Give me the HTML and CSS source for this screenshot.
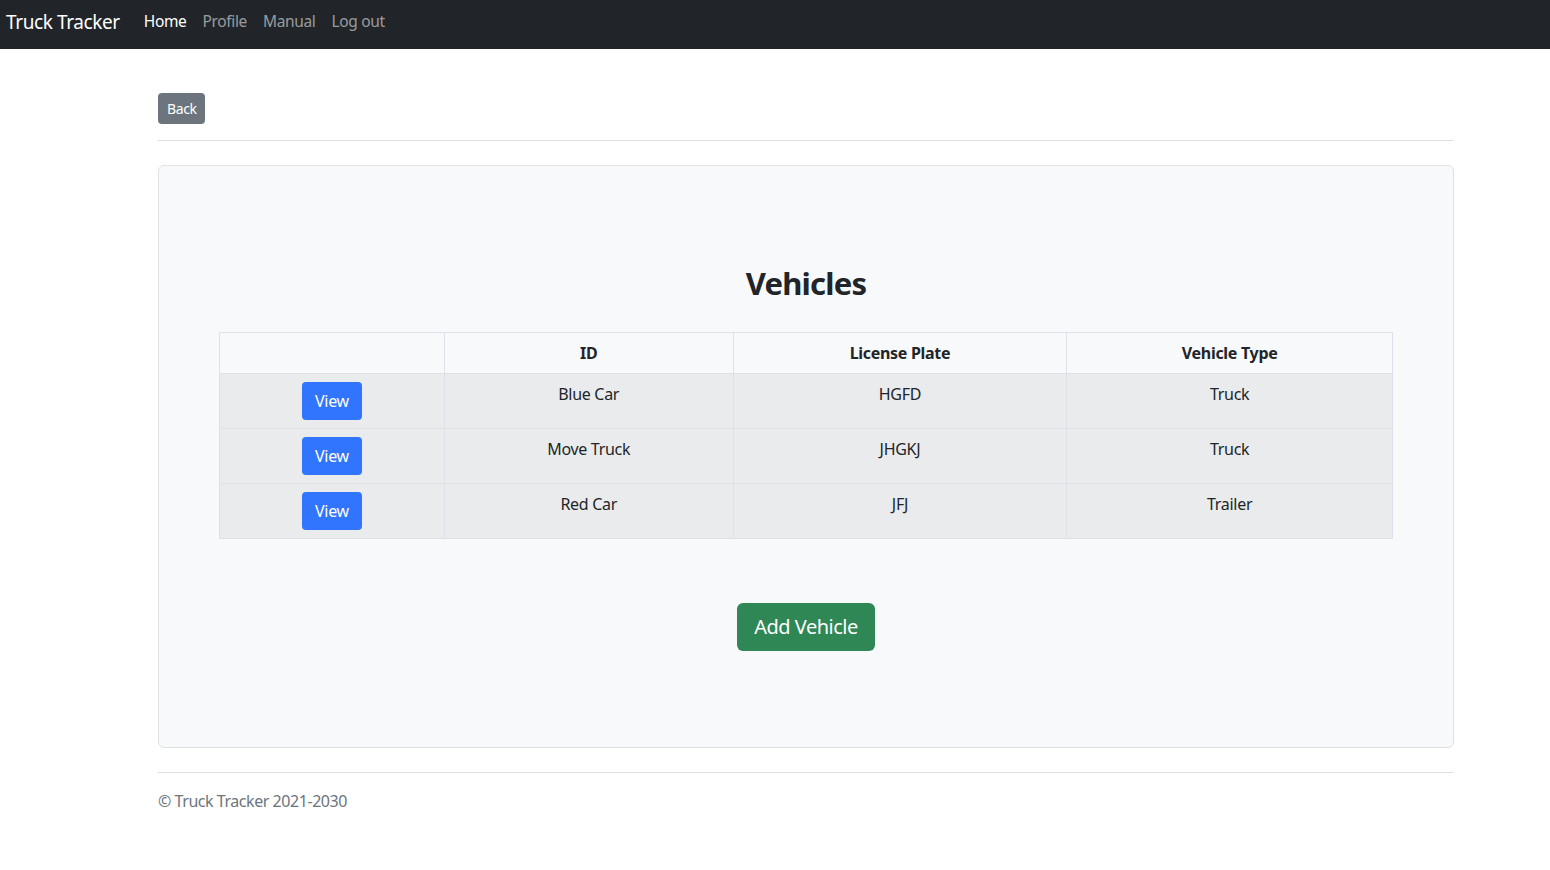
FILE: index.html
```html
<!DOCTYPE html>
<html lang="en">
<head>
<meta charset="utf-8">
<title>Truck Tracker</title>
<link rel="stylesheet" href="styles.css">
</head>
<body>
<nav class="navbar">
  <a class="brand" href="#">Truck Tracker</a>
  <ul class="nav">
    <li><a class="nav-link active" href="#">Home</a></li>
    <li><a class="nav-link" href="#">Profile</a></li>
    <li><a class="nav-link" href="#">Manual</a></li>
    <li><a class="nav-link" href="#">Log out</a></li>
  </ul>
</nav>
<main class="container">
  <div class="top">
    <button class="btn btn-back">Back</button>
  </div>
  <hr class="rule">
  <section class="card">
    <h2 class="title">Vehicles</h2>
    <table class="table">
      <thead>
        <tr>
          <th class="c1"></th>
          <th class="c2">ID</th>
          <th class="c3">License Plate</th>
          <th class="c4">Vehicle Type</th>
        </tr>
      </thead>
      <tbody>
        <tr>
          <td><button class="btn btn-view">View</button></td>
          <td>Blue Car</td>
          <td>HGFD</td>
          <td>Truck</td>
        </tr>
        <tr>
          <td><button class="btn btn-view">View</button></td>
          <td>Move Truck</td>
          <td>JHGKJ</td>
          <td>Truck</td>
        </tr>
        <tr>
          <td><button class="btn btn-view">View</button></td>
          <td>Red Car</td>
          <td>JFJ</td>
          <td>Trailer</td>
        </tr>
      </tbody>
    </table>
    <div class="actions">
      <button class="btn btn-add">Add Vehicle</button>
    </div>
  </section>
  <hr class="rule footer-rule">
  <footer class="footer">© Truck Tracker 2021-2030</footer>
</main>
</body>
</html>
```
FILE: styles.css
```css
* { box-sizing: border-box; }
html, body { margin: 0; padding: 0; }
body {
  font-family: "Noto Sans", "Open Sans", sans-serif;
  font-size: 16px;
  line-height: 1.5;
  color: #212529;
  background: #fff;
}
.navbar {
  height: 49px;
  background: #212529;
  display: flex;
  align-items: center;
  padding: 0 0 5px 6px;
}
.brand {
  color: #fff;
  text-decoration: none;
  font-size: 19px;
  margin-right: 16px;
  letter-spacing: -0.4px;
}
.nav {
  display: flex;
  list-style: none;
  margin: 0;
  padding: 0;
}
.nav-link {
  display: block;
  padding: 8px 8px;
  color: rgba(255,255,255,0.55);
  text-decoration: none;
  font-size: 15.5px;
  letter-spacing: -0.35px;
}
.nav-link.active { color: #fff; }
.container {
  width: 1296px;
  margin-left: 158px;
}
.top { padding-top: 44px; }
.btn {
  font-family: inherit;
  border: 1px solid transparent;
  color: #fff;
  cursor: pointer;
  line-height: 1.5;
}
.btn-back {
  background: #6c757d;
  font-size: 14px;
  padding: 3px 8px;
  border-radius: 4px;
  height: 31px;
  width: 47px;
  letter-spacing: -0.4px;
}
.rule {
  border: 0;
  border-top: 1px solid #dedfe0;
  margin: 16px 0 24px;
}
.card {
  background: #f8f9fa;
  border: 1px solid #dee2e6;
  border-radius: 6px;
  padding: 48px 60px 96px;
}
.title {
  text-align: center;
  font-size: 31px;
  font-weight: 700;
  line-height: 1.2;
  margin: 51px 0 30px;
  letter-spacing: -0.8px;
}
.table {
  width: 100%;
  border-collapse: collapse;
  text-align: center;
}
.table th, .table td {
  border: 1px solid #dee2e6;
  padding: 8px;
  vertical-align: top;
  font-size: 16px;
  letter-spacing: -0.3px;
}
.table th {
  font-weight: 700;
  background: #f8f9fa;
}
.table td { background: #e9ebec; }
.c1 { width: 225px; }
.c2 { width: 289px; }
.c3 { width: 334px; }
.c4 { width: 326px; }
.btn-view {
  background: #3174fd;
  font-size: 16px;
  padding: 6px 12px;
  border-radius: 4px;
  height: 38px;
  width: 60px;
  letter-spacing: -0.3px;
}
.actions {
  display: flex;
  justify-content: center;
  margin-top: 64px;
}
.btn-add {
  background: #2e8754;
  font-size: 20px;
  padding: 7px 16px;
  border-radius: 6px;
  height: 48px;
  width: 138px;
  letter-spacing: -0.5px;
}
.footer-rule { margin: 24px 0 16px; }
.footer {
  color: #6c757d;
  font-size: 16px;
  letter-spacing: -0.45px;
}
```
